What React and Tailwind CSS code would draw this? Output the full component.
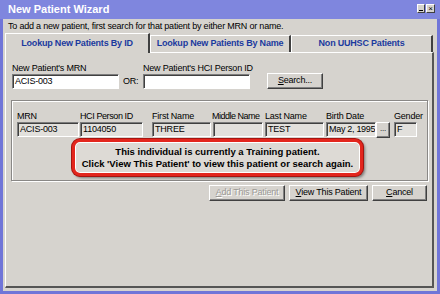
import React from "react";

const font = { fontFamily: '"Liberation Sans", Arial, sans-serif' };

function Field({ value, className = "", readOnly = false }) {
  return (
    <div
      className={`h-[15px] border border-t-[#7c7c7c] border-l-[#7c7c7c] border-b-white border-r-white shadow-[inset_1px_1px_0_#404040] pl-[2px] text-[9px] leading-[13px] text-black overflow-hidden whitespace-nowrap ${
        readOnly ? "bg-[#e2e0dc]" : "bg-white"
      } ${className}`}
    >
      {value}
    </div>
  );
}

function Btn({ children, className = "", disabled = false }) {
  return (
    <div
      className={`h-[16px] flex items-center justify-center border border-t-white border-l-white border-b-[#404040] border-r-[#404040] shadow-[inset_-1px_-1px_0_#808080] bg-[#d6d3ce] text-[9px] whitespace-nowrap ${
        disabled ? "text-[#9c9a96] [text-shadow:1px_1px_0_#fff]" : "text-black"
      } ${className}`}
    >
      {children}
    </div>
  );
}

function Labeled({ label, children, className = "", labelClass = "" }) {
  return (
    <div className={`flex flex-col ${className}`}>
      <div className={`h-[12px] text-[9px] leading-[12px] whitespace-nowrap text-black ${labelClass}`}>{label}</div>
      {children}
    </div>
  );
}

function Tab({ children, className = "" }) {
  return (
    <div
      className={`bg-[#d6d3ce] border-t border-l border-white border-r-2 border-r-[#404040] flex items-center justify-center text-[9px] font-bold text-[#1b3a9e] whitespace-nowrap ${className}`}
    >
      {children}
    </div>
  );
}

export default function App() {
  return (
    <div style={font} className="w-[440px] h-[294px] bg-[#7075d8] flex flex-col overflow-hidden select-none tracking-[-0.2px]">
      {/* title bar */}
      <div className="h-[19px] flex items-center justify-between pl-[8px] pr-[5px] bg-[#7f86de]">
        <span className="text-white font-bold text-[11px] leading-[19px] tracking-normal">New Patient Wizard</span>
        <div className="flex gap-[1px] mt-[-2px]">
          <div className="w-[8px] h-[9px] bg-[#d6d3ce] border border-t-white border-l-white border-b-[#404040] border-r-[#404040] flex items-end justify-center pb-[1px]">
            <div className="w-[4px] h-[1px] bg-black" />
          </div>
          <div className="w-[9px] h-[9px] bg-[#d6d3ce] border border-t-white border-l-white border-b-[#404040] border-r-[#404040] flex items-center justify-center text-[8px] leading-none text-black">
            ×
          </div>
        </div>
      </div>

      {/* body */}
      <div className="flex-1 mx-[3px] mb-[3px] bg-[#d6d3ce] flex flex-col">
        <div className="pl-[5px] pt-[1px] h-[13px] text-[9px] leading-[12px] text-black whitespace-nowrap">
          To add a new patient, first search for that patient by either MRN or name.
        </div>

        {/* tabs */}
        <div className="mt-[1px] h-[19px] flex items-end pl-[2px] relative z-10">
          <Tab className="w-[145px] h-[20px] mb-[-1px]">Lookup New Patients By ID</Tab>
          <Tab className="w-[141px] h-[17px]">Lookup New Patients By Name</Tab>
          <Tab className="w-[142px] h-[17px]">Non UUHSC Patients</Tab>
        </div>

        {/* tab panel */}
        <div className="flex-1 ml-[2px] mr-[3px] mb-[3px] border-t border-l border-white border-r-2 border-b-2 border-r-[#555] border-b-[#555] flex flex-col">
          <div className="flex items-end pl-[6px] pt-[9px]">
            <Labeled label="New Patient's MRN" className="w-[107px]">
              <Field value="ACIS-003" />
            </Labeled>
            <span className="w-[24px] text-[9px] leading-[15px] text-black pl-[4px]">OR:</span>
            <Labeled label="New Patient's HCI Person ID" className="w-[107px]">
              <Field value="" />
            </Labeled>
            <Btn className="w-[56px] ml-[17px]">
              <span>
                <u>S</u>earch...
              </span>
            </Btn>
          </div>

          {/* results group */}
          <div className="mt-[11px] ml-[5px] w-[417px] h-[81px] border border-[#8a8886] shadow-[inset_1px_1px_0_#fff,1px_1px_0_#fff] flex flex-col">
            <div className="flex pl-[5px] pt-[9px]">
              <Labeled label="MRN" className="w-[62px]">
                <Field value="ACIS-003" readOnly />
              </Labeled>
              <Labeled label="HCI Person ID" className="w-[63px] ml-[1px]" labelClass="tracking-[-0.4px]">
                <Field value="1104050" readOnly />
              </Labeled>
              <Labeled label="First Name" className="w-[59px] ml-[9px]">
                <Field value="THREE" readOnly />
              </Labeled>
              <Labeled label="Middle Name" className="w-[50px] ml-[2px]" labelClass="tracking-[-0.5px] -ml-[1px]">
                <Field value="" readOnly />
              </Labeled>
              <Labeled label="Last Name" className="w-[59px] ml-[2px]">
                <Field value="TEST" readOnly />
              </Labeled>
              <Labeled label="Birth Date" className="w-[64px] ml-[2px]">
                <div className="flex">
                  <Field value="May 2, 1995" readOnly className="w-[50px] pl-[1px] tracking-[-0.3px]" />
                  <Btn className="w-[14px] h-[15px]">
                    <span className="text-[8px] leading-none mt-[-3px]">...</span>
                  </Btn>
                </div>
              </Labeled>
              <Labeled label="Gender" className="w-[23px] ml-[4px]">
                <Field value="F" readOnly />
              </Labeled>
            </div>

            {/* training callout */}
            <div className="mt-[1px] ml-[60px] w-[291px] h-[37px] rounded-[8px] border-[3px] border-[#e3261d] bg-[#dddad5] shadow-[0_0_0_1px_#a51410,inset_0_0_0_1px_#fff,2px_2px_3px_rgba(0,0,0,0.45)] flex flex-col items-center justify-center text-[9.5px] font-bold leading-[12px] text-black tracking-normal">
              <span>This individual is currently a Training patient.</span>
              <span>Click 'View This Patient' to view this patient or search again.</span>
            </div>
          </div>

          {/* action buttons */}
          <div className="flex justify-end gap-[4px] mt-[4px] mr-[5px]">
            <Btn className="w-[76px]" disabled>
              <span>
                <u>A</u>dd This Patient
              </span>
            </Btn>
            <Btn className="w-[79px]">
              <span>
                <u>V</u>iew This Patient
              </span>
            </Btn>
            <Btn className="w-[55px]">
              <span>
                <u>C</u>ancel
              </span>
            </Btn>
          </div>
        </div>
      </div>
    </div>
  );
}
